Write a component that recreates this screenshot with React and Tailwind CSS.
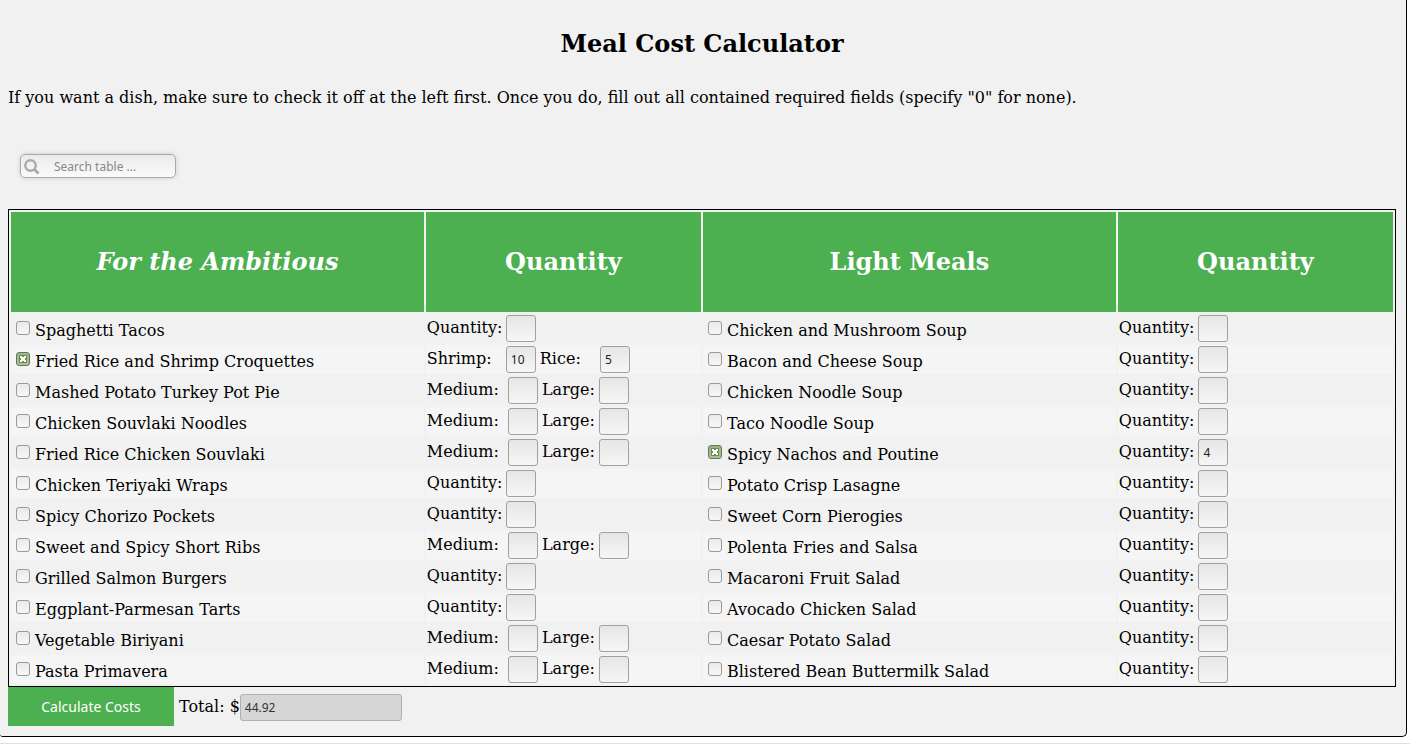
import React, { useState } from 'react';

const NB = '\u00a0';
const single = [['Quantity:', '']];
const sizes = [['Medium:' + NB, ''], ['Large:', '']];

const ambitious = [
  { name: 'Spaghetti Tacos', fields: single },
  { name: 'Fried Rice and Shrimp Croquettes', fields: [['Shrimp:' + NB + NB, '10'], ['Rice:' + NB + NB + NB, '5']], checked: true },
  { name: 'Mashed Potato Turkey Pot Pie', fields: sizes },
  { name: 'Chicken Souvlaki Noodles', fields: sizes },
  { name: 'Fried Rice Chicken Souvlaki', fields: sizes },
  { name: 'Chicken Teriyaki Wraps', fields: single },
  { name: 'Spicy Chorizo Pockets', fields: single },
  { name: 'Sweet and Spicy Short Ribs', fields: sizes },
  { name: 'Grilled Salmon Burgers', fields: single },
  { name: 'Eggplant-Parmesan Tarts', fields: single },
  { name: 'Vegetable Biriyani', fields: sizes },
  { name: 'Pasta Primavera', fields: sizes },
];

const light = [
  { name: 'Chicken and Mushroom Soup', fields: single },
  { name: 'Bacon and Cheese Soup', fields: single },
  { name: 'Chicken Noodle Soup', fields: single },
  { name: 'Taco Noodle Soup', fields: single },
  { name: 'Spicy Nachos and Poutine', fields: [['Quantity:', '4']], checked: true },
  { name: 'Potato Crisp Lasagne', fields: single },
  { name: 'Sweet Corn Pierogies', fields: single },
  { name: 'Polenta Fries and Salsa', fields: single },
  { name: 'Macaroni Fruit Salad', fields: single },
  { name: 'Avocado Chicken Salad', fields: single },
  { name: 'Caesar Potato Salad', fields: single },
  { name: 'Blistered Bean Buttermilk Salad', fields: single },
];

function Tick({ id, checked }) {
  const [on, setOn] = useState(!!checked);
  return (
    <span className="mb-1 grid size-[14px] shrink-0">
      <input
        id={id}
        type="checkbox"
        checked={on}
        onChange={(e) => setOn(e.target.checked)}
        className="col-start-1 row-start-1 size-[14px] appearance-none rounded-[3px] border border-[#999] bg-linear-to-b from-[#eaeaea] to-[#f7f7f7] checked:border-[#6b7163] checked:from-[#98b77b] checked:to-[#abc68f]"
      />
      {on && (
        <svg viewBox="0 0 14 14" className="pointer-events-none col-start-1 row-start-1 size-[14px]" aria-hidden="true">
          <path d="M3 3h8v8H3z" fill="#6f8b55" />
          <path d="M4 4h2v1h2V4h2v2H9v2h1v2H8V9H6v1H4V8h1V6H4z" fill="#fff" />
        </svg>
      )}
    </span>
  );
}

function Dish({ id, dish }) {
  return (
    <td className="h-[29px] p-0">
      <div className="flex items-center pt-[2px] pl-[5px]">
        <Tick id={id} checked={dish.checked} />
        <label htmlFor={id} className="pl-[5px] pt-[3px] leading-5">{dish.name}</label>
      </div>
    </td>
  );
}

function Amounts({ id, dish }) {
  return (
    <td className="h-[29px] p-0">
      <div className="flex items-center gap-1 whitespace-nowrap pl-px">
        {dish.fields.map(([label, value], i) => (
          <div key={label} className="flex items-center gap-1">
            <label htmlFor={id + i} className="pb-px leading-5">{label}</label>
            <input
              id={id + i}
              type="text"
              defaultValue={value}
              className="h-[27px] w-[30px] rounded-[3px] border border-[#a0a0a0] bg-linear-to-b from-[#e6e6e6] to-[#f6f6f6] px-1 font-['Noto_Sans',sans-serif] text-xs text-[#222]"
            />
          </div>
        ))}
      </div>
    </td>
  );
}

export default function App() {
  return (
    <div className="border-b border-[#e0e0e0] bg-white pb-[6px] font-['DejaVu_Serif',serif] text-base text-black">
      <main className="mr-[3px] rounded-br-[5px] rounded-bl-[3px] border-r border-b border-black bg-[#f1f1f1] pt-7 pr-[10px] pb-[10px] pl-2">
        <h1 className="text-center text-2xl leading-8 font-bold">Meal Cost Calculator</h1>
        <p className="mt-7 leading-5">
          If you want a dish, make sure to check it off at the left first. Once you do, fill out all contained required fields (specify "0" for none).
        </p>

        <div className="mt-[46px] ml-3 flex h-6 w-[156px] items-center rounded-[5px] border border-[#aaa] bg-linear-to-b from-[#ebebeb] to-[#fafafa] pl-[3px] shadow-[0_0_4px_#ccc]">
          <svg viewBox="0 0 16 16" className="mt-[2px] size-4 shrink-0" fill="none" stroke="#aaa" aria-hidden="true">
            <circle cx="6.5" cy="6.5" r="5.2" strokeWidth="2.4" />
            <path d="M10.3 10.3l4.2 4.2" strokeWidth="2.9" />
          </svg>
          <input
            type="search"
            aria-label="Search table"
            placeholder="Search table ..."
            className="h-full w-full min-w-0 bg-transparent pl-[14px] font-['Noto_Sans',sans-serif] text-xs placeholder:text-[#888]"
          />
        </div>

        <table className="mt-[31px] w-full table-fixed border-separate border-spacing-[2px] border border-black">
          <colgroup>
            <col className="w-[30%]" />
            <col className="w-[20%]" />
            <col className="w-[30%]" />
            <col className="w-[20%]" />
          </colgroup>
          <thead>
            <tr className="h-[100px] text-2xl text-white">
              <th className="bg-[#4caf50] p-0 italic">For the Ambitious</th>
              <th className="bg-[#4caf50] p-0">Quantity</th>
              <th className="bg-[#4caf50] p-0">Light Meals</th>
              <th className="bg-[#4caf50] p-0">Quantity</th>
            </tr>
          </thead>
          <tbody>
            {ambitious.map((dish, i) => (
              <tr key={dish.name} className="even:bg-[#f5f5f5]">
                <Dish id={`a${i}`} dish={dish} />
                <Amounts id={`aq${i}-`} dish={dish} />
                <Dish id={`l${i}`} dish={light[i]} />
                <Amounts id={`lq${i}-`} dish={light[i]} />
              </tr>
            ))}
          </tbody>
        </table>

        <div className="flex items-center">
          <button type="button" className="h-[39px] min-w-[166px] bg-[#4caf50] px-8 font-['Noto_Sans',sans-serif] text-sm text-white">
            Calculate Costs
          </button>
          <label htmlFor="total" className="pl-[5px]">Total: $</label>
          <input
            id="total"
            type="text"
            readOnly
            value="44.92"
            className="mt-[2px] h-[27px] w-[162px] rounded-[3px] border border-[#b0b0b0] bg-[#d6d6d6] px-1 font-['Noto_Sans',sans-serif] text-xs text-[#333]"
          />
        </div>
      </main>
    </div>
  );
}
